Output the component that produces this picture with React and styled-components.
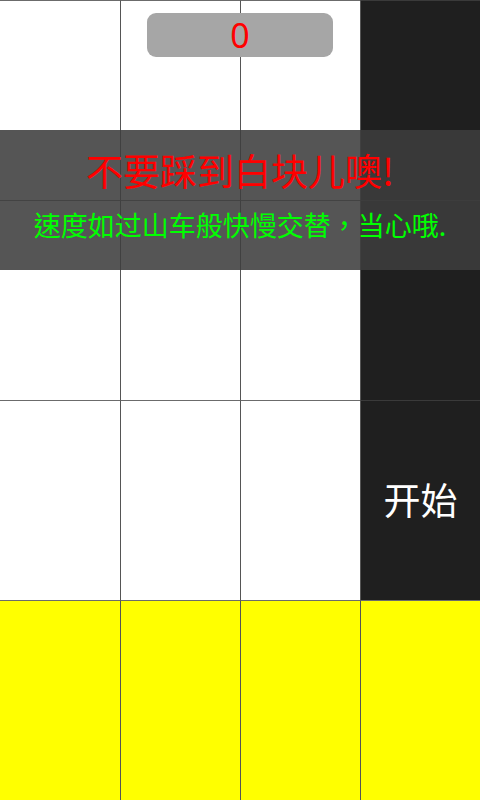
import React from 'react';
import styled, { createGlobalStyle } from 'styled-components';

const GlobalStyle = createGlobalStyle`
    html, body {
        margin: 0;
        padding: 0;
        background: #ffffff;
    }
    body {
        font-family: "Noto Sans CJK SC", "Noto Sans", sans-serif;
    }
`;

const Screen = styled.div`
    position: relative;
    width: 480px;
    height: 800px;
    overflow: hidden;
`;

const Board = styled.div`
    display: grid;
    grid-template-columns: repeat(4, 120px);
    grid-template-rows: repeat(4, 200px);
`;

const COLOURS = {
    white: '#ffffff',
    black: '#1f1f1f',
    yellow: '#ffff00'
};

const Cell = styled.div`
    box-sizing: border-box;
    display: flex;
    align-items: center;
    justify-content: center;
    background: ${(p) => COLOURS[p.$kind]};
    border-top: 1px solid ${(p) => (p.$kind === 'black' ? '#3a3a3a' : '#6b6b6b')};
    border-left: ${(p) => (p.$col === 0 ? 'none' : '1px solid #555555')};
    color: #ffffff;
    font-size: 37px;
    line-height: 1;
    padding-bottom: 2px;
`;

const Score = styled.div`
    position: absolute;
    top: 13px;
    left: 147px;
    width: 186px;
    height: 44px;
    border-radius: 9px;
    background: #a6a6a6;
    color: #ff0000;
    font-family: "Noto Sans", sans-serif;
    font-size: 34px;
    line-height: 44px;
    text-align: center;
`;

const Banner = styled.div`
    position: absolute;
    top: 130px;
    left: 0;
    right: 0;
    height: 140px;
    background: rgba(62, 62, 62, 0.88);
    display: flex;
    flex-direction: column;
    align-items: center;
`;

const Title = styled.div`
    color: #ff0000;
    font-size: 37px;
    line-height: 1;
    margin-top: 22px;
`;

const Hint = styled.div`
    color: #00ff00;
    font-family: "Noto Sans CJK TC", "Noto Sans CJK SC", sans-serif;
    font-size: 27px;
    line-height: 1;
    margin-top: 22px;
`;

const rows = [
    ['white', 'white', 'white', 'black'],
    ['white', 'white', 'white', 'black'],
    ['white', 'white', 'white', 'black'],
    ['yellow', 'yellow', 'yellow', 'yellow']
];

const App = () => (
    <>
        <GlobalStyle />
        <Screen>
            <Board>
                {rows.map((row, r) =>
                    row.map((kind, c) => (
                        <Cell key={`${r}-${c}`} $kind={kind} $col={c}>
                            {r === 2 && c === 3 ? '开始' : null}
                        </Cell>
                    ))
                )}
            </Board>
            <Score>0</Score>
            <Banner>
                <Title>不要踩到白块儿噢!</Title>
                <Hint>速度如过山车般快慢交替，当心哦.</Hint>
            </Banner>
        </Screen>
    </>
);

export default App;
